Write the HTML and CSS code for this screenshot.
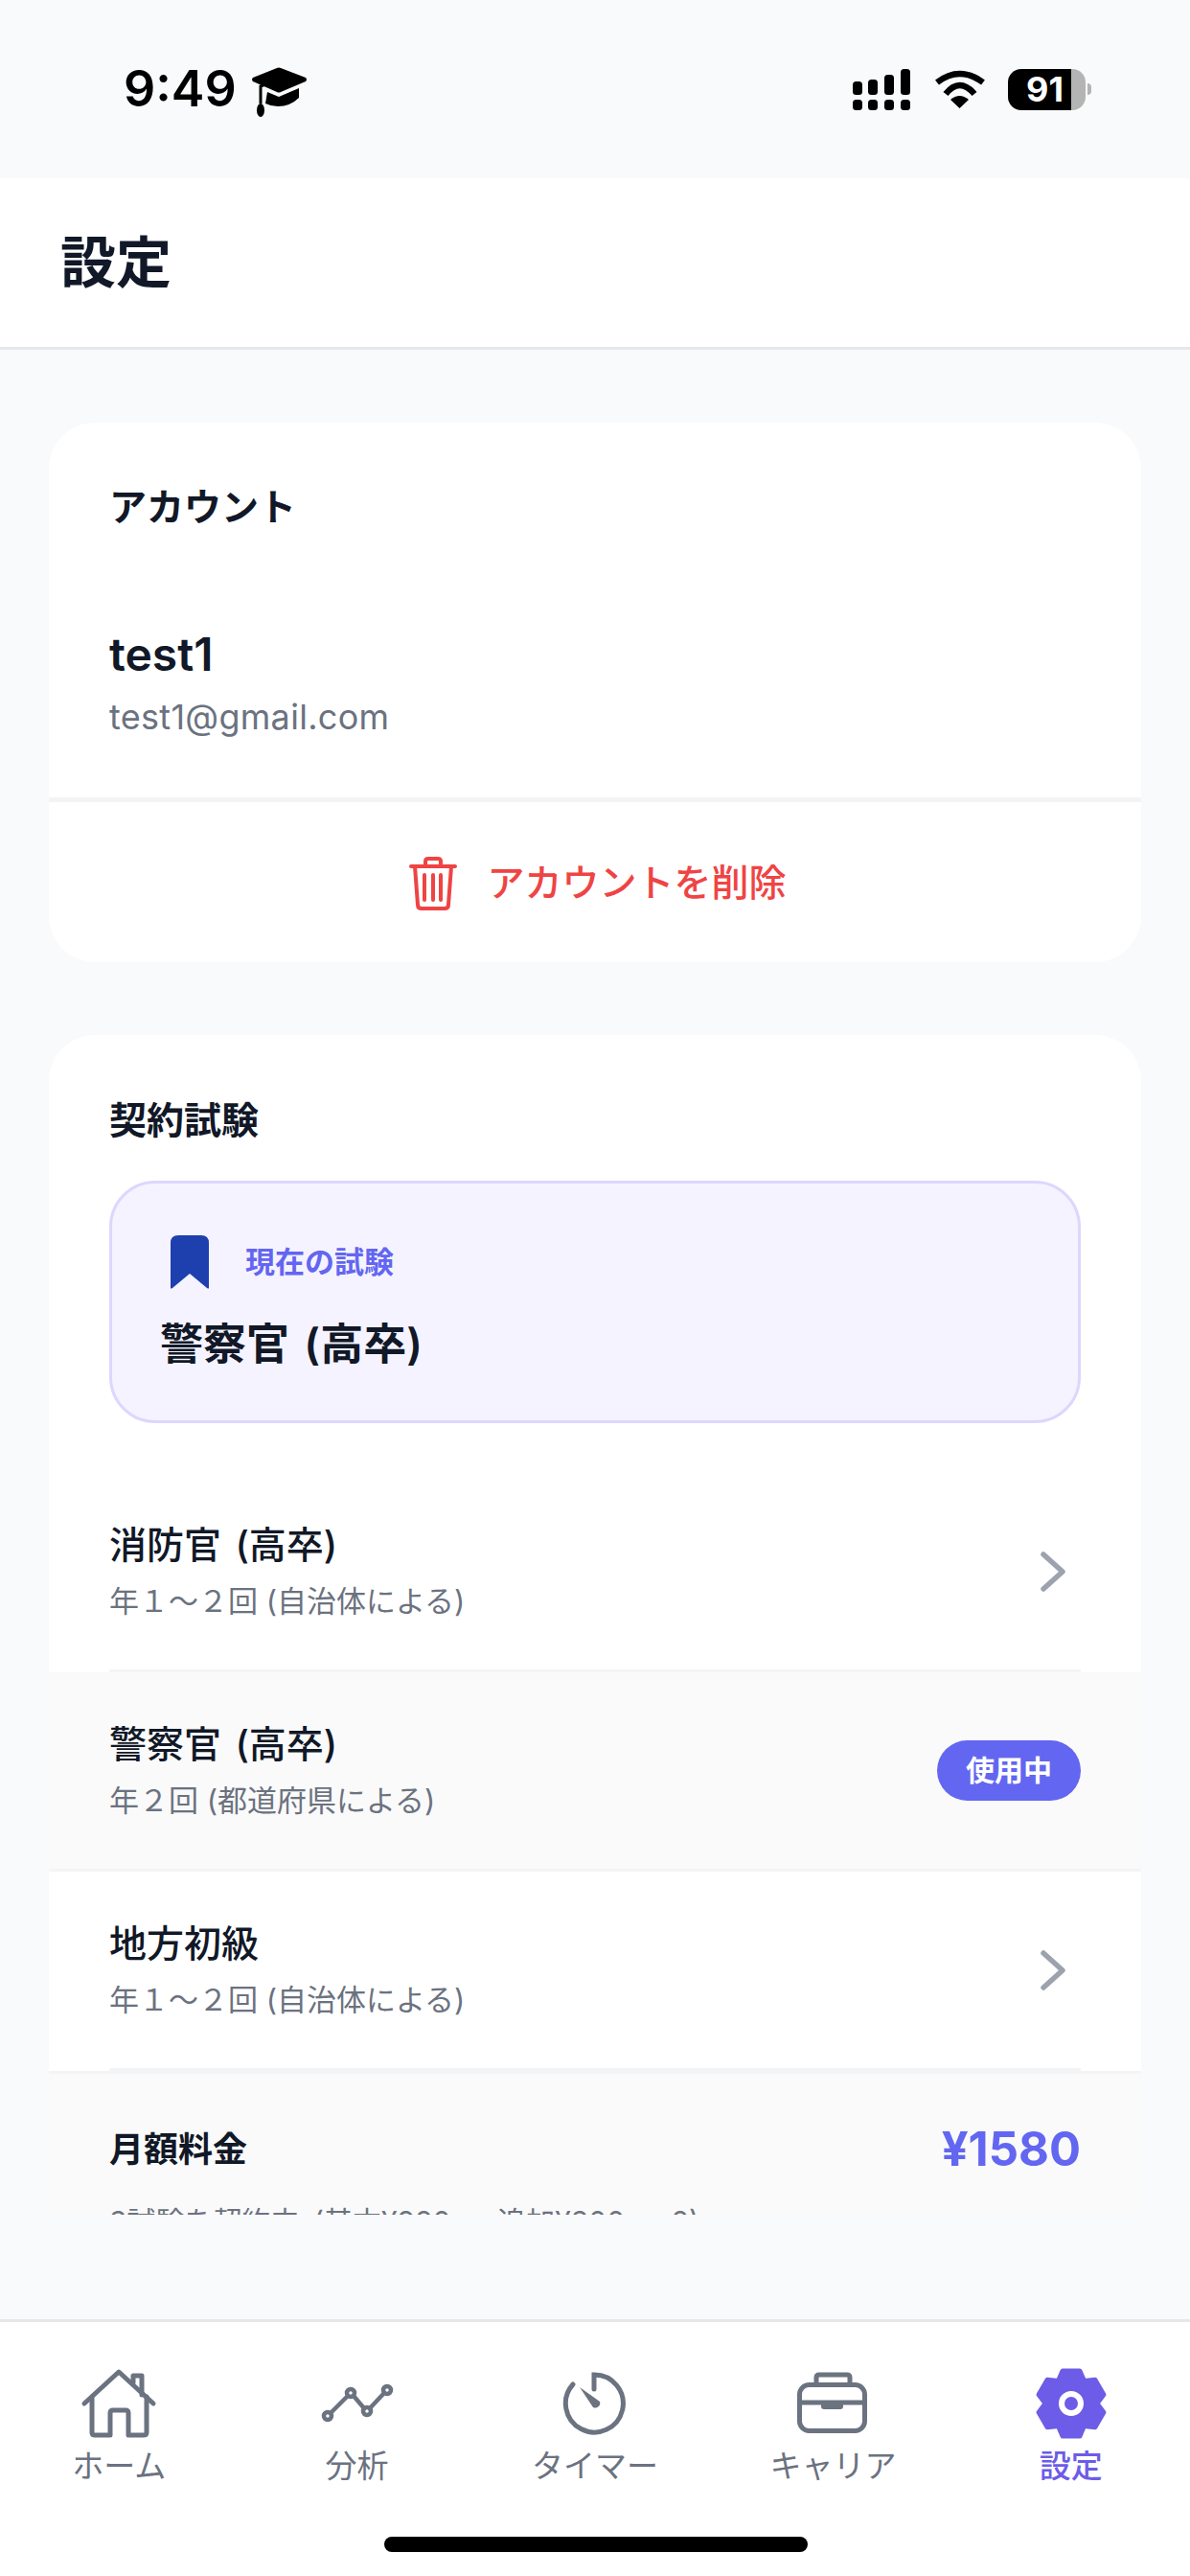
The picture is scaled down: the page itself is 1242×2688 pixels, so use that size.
FILE: index.html
```html
<!DOCTYPE html>
<html lang="ja">
<head>
    <meta charset="UTF-8">
    <meta name="viewport" content="width=device-width, initial-scale=1.0">
    <title>設定</title>
    <link rel="stylesheet" href="styles.css">
</head>
<body>
    <div class="status-bar">
        <div class="status-left">
            <span class="clock">9:49</span>
            <svg class="cap-icon" width="60" height="54" viewBox="0 0 60 54">
                <path d="M2 11 L27 1 Q29 0 31 1 L57 11 Q59 13 57 15 L31 26 Q29 27 27 26 L2 15 Q0 13 2 11 Z" fill="#000"/>
                <path d="M17 26 L29 31 L50 22 V32 Q41 41 28 41 Q21 41 15 38 Z" fill="#000"/>
                <path d="M29 12 L10 20 V38" fill="none" stroke="#000" stroke-width="3"/>
                <ellipse cx="10" cy="45" rx="4" ry="7" fill="#000"/>
            </svg>
        </div>
        <div class="status-right">
            <svg width="64" height="46" viewBox="0 0 64 46">
                <rect x="2" y="15" width="10" height="14" rx="3.5"/>
                <rect x="18" y="13" width="10" height="16" rx="3.5"/>
                <rect x="35" y="8" width="10" height="21" rx="3.5"/>
                <rect x="52" y="2" width="10" height="27" rx="3.5"/>
                <rect x="2" y="34" width="10" height="11" rx="3.5"/>
                <rect x="18" y="34" width="10" height="11" rx="3.5"/>
                <rect x="35" y="34" width="10" height="11" rx="3.5"/>
                <rect x="52" y="34" width="10" height="11" rx="3.5"/>
            </svg>
            <svg width="56" height="44" viewBox="0 0 56 44">
                <path d="M4 15 Q27.5 -3 52 15" fill="none" stroke="#000" stroke-width="6.5"/>
                <path d="M13 27 Q27.5 9 43 27" fill="none" stroke="#000" stroke-width="6.5"/>
                <path d="M27.5 42 L18 33 Q27.5 25 37 33 Z" fill="#000"/>
            </svg>
            <div class="battery">
                <div class="battery-body">91</div>
                <div class="battery-nub"></div>
            </div>
        </div>
    </div>

    <header class="page-header">
        <h1>設定</h1>
    </header>

    <main class="scroll">
        <section class="card">
            <h2 class="card-title">アカウント</h2>
            <div class="user">
                <div class="user-name">test1</div>
                <div class="user-email">test1@gmail.com</div>
            </div>
            <div class="delete-row">
                <svg width="52" height="60" viewBox="0 0 52 60" fill="none" stroke="#ef4444" stroke-width="4" stroke-linecap="round" stroke-linejoin="round">
                    <path d="M3 13 H49"/>
                    <path d="M18 13 V8 Q18 5 21 5 H31 Q34 5 34 8 V13"/>
                    <path d="M7 13 L10 53 Q10 57 14 57 H38 Q42 57 42 53 L45 13"/>
                    <path d="M17 22 V48 M26 22 V48 M34 22 V48"/>
                </svg>
                <span class="delete-label">アカウントを削除</span>
            </div>
        </section>

        <section class="card">
            <h2 class="card-title exam-title">契約試験</h2>
            <div class="current">
                <div class="current-head">
                    <svg width="40" height="56" viewBox="0 0 40 56">
                        <path d="M0 8 Q0 0 8 0 H32 Q40 0 40 8 V55 Q40 56 38 55 L20 40 L2 55 Q0 56 0 55 Z" fill="#1e40af"/>
                    </svg>
                    <span>現在の試験</span>
                </div>
                <div class="current-name">警察官 (高卒)</div>
            </div>

            <div class="exam-row inset">
                <div>
                    <div class="exam-name">消防官 (高卒)</div>
                    <div class="exam-sub">年１〜２回 (自治体による)</div>
                </div>
                <svg class="chevron" width="30" height="44" viewBox="0 0 30 44">
                    <path d="M5 4 L25 22 L5 40" fill="none" stroke="#9ca3af" stroke-width="5.5" stroke-linecap="round" stroke-linejoin="round"/>
                </svg>
            </div>
            <div class="exam-row active">
                <div>
                    <div class="exam-name">警察官 (高卒)</div>
                    <div class="exam-sub">年２回 (都道府県による)</div>
                </div>
                <span class="badge">使用中</span>
            </div>
            <div class="exam-row inset">
                <div>
                    <div class="exam-name">地方初級</div>
                    <div class="exam-sub">年１〜２回 (自治体による)</div>
                </div>
                <svg class="chevron" width="30" height="44" viewBox="0 0 30 44">
                    <path d="M5 4 L25 22 L5 40" fill="none" stroke="#9ca3af" stroke-width="5.5" stroke-linecap="round" stroke-linejoin="round"/>
                </svg>
            </div>

            <div class="fee">
                <div class="fee-top">
                    <span class="fee-label">月額料金</span>
                    <span class="fee-price">¥1580</span>
                </div>
                <div class="fee-sub">3試験を契約中 (基本¥980 + 追加¥300 × 2)</div>
            </div>
        </section>
    </main>

    <div class="scroll-gap"></div>

    <nav class="tabs">
        <div class="tab">
            <svg width="84" height="84" viewBox="0 0 84 84" fill="none" stroke="#6b7280" stroke-width="5" stroke-linecap="round" stroke-linejoin="round">
                <path d="M6 42 L42 9 L78 42"/>
                <path d="M57 20 V13 H66 V33"/>
                <path d="M14 35 V72 Q14 75 17 75 H33 V52 Q33 49 36 49 H49 Q52 49 52 52 V75 H68 Q71 75 71 72 V35"/>
            </svg>
            <span>ホーム</span>
        </div>
        <div class="tab">
            <svg width="84" height="84" viewBox="0 0 84 84" fill="none" stroke="#6b7280" stroke-width="4.5" stroke-linecap="round">
                <path d="M14 52 L32 34 M38 34 L49 47 M55 47 L70 31"/>
                <circle cx="11" cy="55" r="4"/>
                <circle cx="35" cy="31" r="4"/>
                <circle cx="52" cy="50" r="4"/>
                <circle cx="73" cy="28" r="4"/>
            </svg>
            <span>分析</span>
        </div>
        <div class="tab">
            <svg width="84" height="84" viewBox="0 0 84 84" fill="none" stroke="#6b7280" stroke-width="5" stroke-linecap="round">
                <path d="M41 27 V12 A30 30 0 1 1 19 22"/>
                <path d="M26 25 L47 40 A5 5 0 0 1 40 46 Z" fill="#6b7280" stroke="none"/>
            </svg>
            <span>タイマー</span>
        </div>
        <div class="tab">
            <svg width="84" height="84" viewBox="0 0 84 84" fill="none" stroke="#6b7280" stroke-width="5" stroke-linejoin="round">
                <rect x="7.5" y="22.5" width="68" height="48" rx="10"/>
                <path d="M25 21 V15 Q25 12 28 12 H57 Q60 12 60 15 V21"/>
                <path d="M7 41 H76"/>
                <path d="M30 41 H53 V45 Q53 48 50 48 H33 Q30 48 30 45 Z" fill="#6b7280" stroke="none"/>
            </svg>
            <span>キャリア</span>
        </div>
        <div class="tab tab-active">
            <svg width="84" height="84" viewBox="0 0 84 84">
                <path d="M33 8 H51 L55.5 18.6 L66.9 17.2 L75.9 32.8 L69 42 L75.9 51.2 L66.9 66.8 L55.5 65.4 L51 76 H33 L28.5 65.4 L17.1 66.8 L8.1 51.2 L15 42 L8.1 32.8 L17.1 17.2 L28.5 18.6 Z" fill="#6c5ce7" stroke="#6c5ce7" stroke-width="5" stroke-linejoin="round"/>
                <circle cx="42" cy="42" r="10" fill="#6c5ce7" stroke="#fff" stroke-width="6"/>
            </svg>
            <span>設定</span>
        </div>
        <div class="home-bar"></div>
    </nav>
</body>
</html>
```

FILE: styles.css
```css
* {
    box-sizing: border-box;
}

html, body {
    margin: 0;
    padding: 0;
}

body {
    width: 1242px;
    height: 2688px;
    display: flex;
    flex-direction: column;
    overflow: hidden;
    background-color: #f9fafb;
    color: #111827;
    font-family: Inter, "Noto Sans CJK JP", sans-serif;
}

/* status bar */
.status-bar {
    height: 186px;
    flex-shrink: 0;
    display: flex;
    justify-content: space-between;
    align-items: center;
    padding: 0 103px 0 129px;
}

.status-left {
    display: flex;
    align-items: center;
    gap: 15px;
}

.clock {
    font-size: 52px;
    font-weight: 600;
    line-height: 60px;
    color: #000;
}

.cap-icon {
    margin-top: 8px;
}

.status-right {
    display: flex;
    align-items: center;
    gap: 22px;
}

.battery {
    display: flex;
    align-items: center;
    gap: 2px;
}

.battery-body {
    width: 81px;
    height: 43px;
    border-radius: 14px;
    background: linear-gradient(to right, #000 66px, #b4b4b4 66px);
    color: #fff;
    font-size: 36px;
    font-weight: 700;
    line-height: 43px;
    padding-left: 19px;
}

.battery-nub {
    width: 4px;
    height: 12px;
    border-radius: 0 6px 6px 0;
    background-color: #b4b4b4;
}

/* header */
.page-header {
    height: 179px;
    flex-shrink: 0;
    display: flex;
    align-items: center;
    padding: 0 63px;
    background-color: #fff;
    border-bottom: 3px solid #e5e7eb;
}

.page-header h1 {
    margin: 0;
    font-size: 58px;
    font-weight: 700;
    line-height: 70px;
}

/* scrolling content */
.scroll {
    height: 1946px;
    flex-shrink: 0;
    overflow: hidden;
    display: flex;
    flex-direction: column;
    gap: 76px;
    padding: 76px 51px 0;
}

.scroll-gap {
    height: 109px;
    flex-shrink: 0;
}

.card {
    flex-shrink: 0;
    background-color: #fff;
    border-radius: 48px;
    overflow: hidden;
}

.card-title {
    margin: 0;
    padding: 58px 63px 0;
    font-size: 39px;
    font-weight: 600;
    line-height: 60px;
}

.exam-title {
    padding-top: 59px;
}

.user {
    padding: 94px 63px 54px;
}

.user-name {
    font-size: 48px;
    font-weight: 600;
    line-height: 60px;
}

.user-email {
    margin-top: 5px;
    font-size: 36px;
    line-height: 60px;
    letter-spacing: 0.3px;
    color: #6b7280;
}

.delete-row {
    height: 172px;
    display: flex;
    justify-content: center;
    align-items: center;
    gap: 30px;
    padding-left: 5px;
    border-top: 5px solid #f3f4f6;
    color: #ef4444;
    font-size: 39px;
    font-weight: 500;
}

.delete-label {
    margin-bottom: 5px;
}

.current {
    height: 253px;
    margin: 33px 63px 52px;
    padding: 54px 48px 0 50px;
    background-color: #f5f3ff;
    border: 3px solid #ddd6fe;
    border-radius: 48px;
}

.current-head {
    display: flex;
    align-items: center;
    gap: 38px;
    padding-left: 11px;
    color: #6366f1;
    font-size: 31px;
    font-weight: 600;
    line-height: 56px;
}

.current-name {
    margin-top: 28px;
    font-size: 45px;
    font-weight: 600;
    line-height: 60px;
    word-spacing: 4px;
}

.exam-row {
    height: 208px;
    display: flex;
    justify-content: space-between;
    align-items: center;
    border-bottom: 3px solid #f3f4f6;
}

.inset {
    margin: 0 63px;
}

.active {
    padding: 0 63px;
    background-color: #fafafa;
}

.exam-name {
    font-size: 39px;
    font-weight: 500;
    line-height: 60px;
    word-spacing: 4px;
}

.exam-sub {
    margin-top: 2px;
    font-size: 31px;
    line-height: 54px;
    color: #6b7280;
}

.chevron {
    margin-right: 14px;
}

.badge {
    padding: 0 30px;
    border-radius: 32px;
    background-color: #6366f1;
    color: #fff;
    font-size: 30px;
    font-weight: 600;
    line-height: 63px;
}

.fee {
    padding: 49px 63px 40px;
    background-color: #fafafa;
    border-top: 3px solid #f3f4f6;
}

.fee-top {
    display: flex;
    justify-content: space-between;
    align-items: center;
    margin-bottom: 18px;
}

.fee-label {
    font-size: 36px;
    font-weight: 600;
    line-height: 60px;
}

.fee-price {
    font-size: 49px;
    font-weight: 700;
    line-height: 60px;
    color: #6366f1;
}

.fee-sub {
    font-size: 30px;
    line-height: 54px;
    word-spacing: 6px;
    color: #6b7280;
}

/* tab bar */
.tabs {
    position: relative;
    flex: 1;
    display: flex;
    padding-top: 43px;
    background-color: #fff;
    border-top: 3px solid #e5e7eb;
}

.tab {
    flex: 1;
    display: flex;
    flex-direction: column;
    align-items: center;
    color: #6b7280;
    font-size: 33px;
    font-weight: 400;
    line-height: 46px;
}

.tab-active {
    color: #6c5ce7;
    font-weight: 500;
}

.home-bar {
    position: absolute;
    left: 401px;
    bottom: 25px;
    width: 442px;
    height: 16px;
    border-radius: 8px;
    background-color: #000;
}
```
